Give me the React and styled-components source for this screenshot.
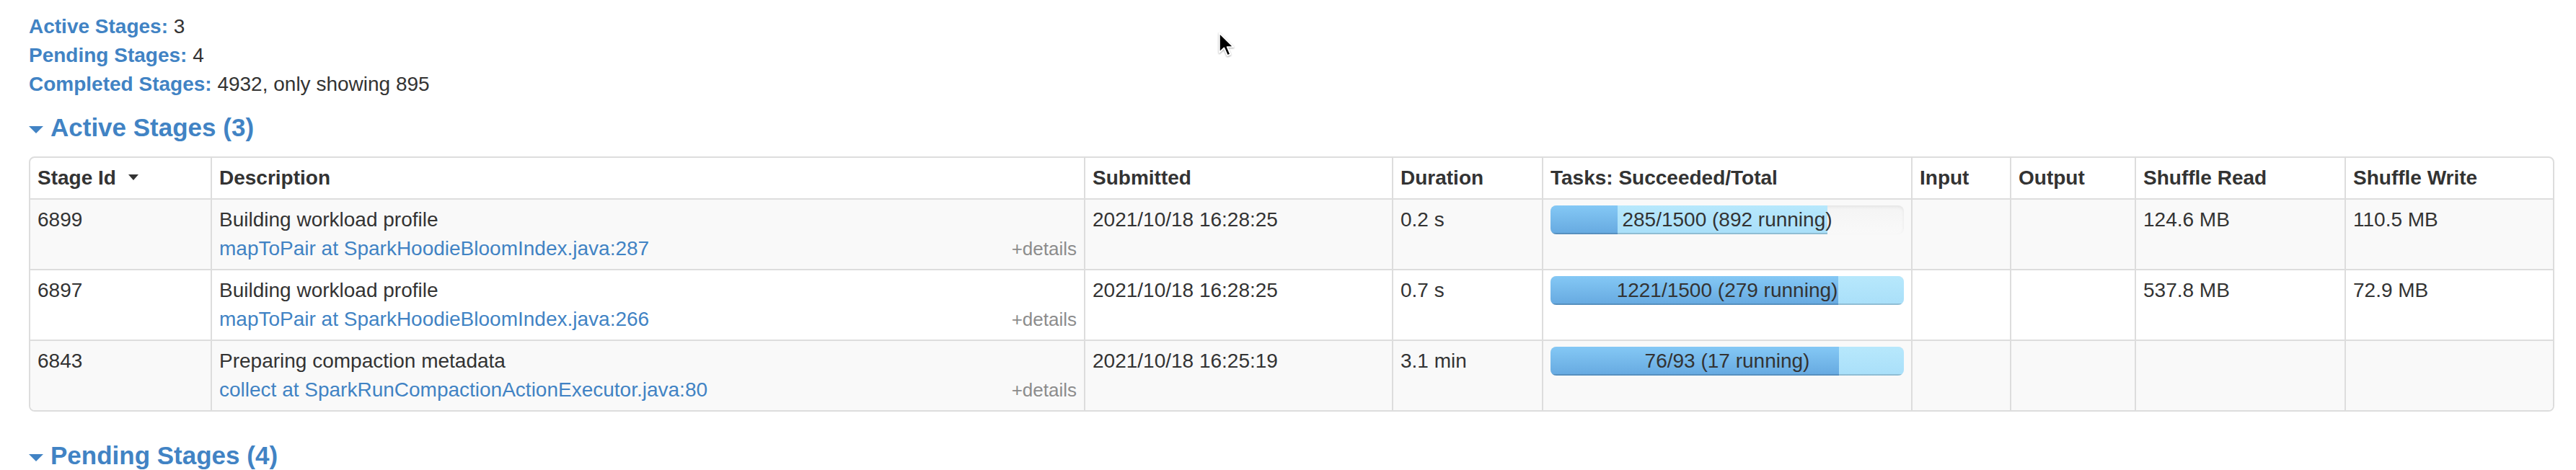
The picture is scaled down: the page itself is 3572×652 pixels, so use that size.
import styled, { createGlobalStyle } from "styled-components";

const linkBlue = "#4183c4";
const border = "#dddddd";

const GlobalStyle = createGlobalStyle`
  html, body {
    margin: 0;
    padding: 0;
    background: #ffffff;
  }
  body {
    font-family: "Liberation Sans", Arial, Helvetica, sans-serif;
    font-size: 28px;
    line-height: 40px;
    color: #333333;
  }
`;

const Page = styled.div`
  position: relative;
  padding: 17px 30px 0 40px;
`;

const Summary = styled.ul`
  list-style: none;
  margin: 0;
  padding: 0;
`;

const SummaryItem = styled.li`
  line-height: 40px;
  white-space: nowrap;
`;

const SummaryLabel = styled.a`
  color: ${linkBlue};
  font-weight: bold;
  text-decoration: none;
`;

const SectionTitle = styled.h4`
  margin: ${(p) => (p.$first ? "20px 0 20px" : "41px 0 0")};
  font-size: 35px;
  line-height: 40px;
  font-weight: bold;
  color: ${linkBlue};
  white-space: nowrap;
`;

const OpenArrow = styled.span`
  display: inline-block;
  width: 0;
  height: 0;
  border-left: 10px solid transparent;
  border-right: 10px solid transparent;
  border-top: 10px solid ${linkBlue};
  margin: 0 10px 4px 0;
`;

const Table = styled.table`
  width: 100%;
  table-layout: fixed;
  border-collapse: separate;
  border-spacing: 0;
  border: 2px solid ${border};
  border-radius: 8px;

  tbody tr:last-child td:first-child {
    border-bottom-left-radius: 6px;
  }
  tbody tr:last-child td:last-child {
    border-bottom-right-radius: 6px;
  }
`;

const Col = styled.col`
  width: ${(p) => p.$w}px;
`;

const HeadCell = styled.th`
  text-align: left;
  font-weight: bold;
  padding: 8px 10px;
  border-left: 2px solid ${border};
  vertical-align: top;
  white-space: nowrap;

  &:first-child {
    border-left: 0;
  }
`;

const SortArrow = styled.span`
  display: inline-block;
  width: 0;
  height: 0;
  border-left: 7px solid transparent;
  border-right: 7px solid transparent;
  border-top: 8px solid #333333;
  margin: 0 0 6px 17px;
`;

const Row = styled.tr`
  background: ${(p) => (p.$striped ? "#f9f9f9" : "#ffffff")};
`;

const Cell = styled.td`
  padding: 8px 10px;
  border-top: 2px solid ${border};
  border-left: 2px solid ${border};
  vertical-align: top;
  white-space: nowrap;

  &:first-child {
    border-left: 0;
  }
`;

const CallSite = styled.div`
  display: flex;
  justify-content: space-between;
  align-items: baseline;
`;

const SiteLink = styled.a`
  color: ${linkBlue};
  text-decoration: none;
`;

const Details = styled.span`
  color: #8c8c8c;
  font-size: 26px;
`;

const Progress = styled.div`
  position: relative;
  display: flex;
  height: 40px;
  border-radius: 8px;
  overflow: hidden;
  background: linear-gradient(#f4f4f4, #f9f9f9);
  box-shadow: inset 0 2px 4px rgba(0, 0, 0, 0.07);
`;

const Bar = styled.div`
  height: 100%;
  flex: none;
  background: ${(p) =>
    p.$running
      ? "linear-gradient(#b7e8fc, #a9dff9)"
      : "linear-gradient(#84c8f5, #66a9e0)"};
  box-shadow: inset 0 -2px 0 rgba(0, 0, 0, 0.15);
`;

const ProgressLabel = styled.span`
  position: absolute;
  left: 0;
  right: 0;
  top: 0;
  text-align: center;
  line-height: 40px;
  color: #333333;
`;

const Cursor = styled.svg`
  position: absolute;
  left: 1689px;
  top: 44px;
  width: 24px;
  height: 36px;
  filter: drop-shadow(0 1px 1px rgba(0, 0, 0, 0.35));
`;

const columns = [
  { title: "Stage Id", w: 250, sort: true },
  { title: "Description", w: 1211 },
  { title: "Submitted", w: 427 },
  { title: "Duration", w: 208 },
  { title: "Tasks: Succeeded/Total", w: 512 },
  { title: "Input", w: 137 },
  { title: "Output", w: 173 },
  { title: "Shuffle Read", w: 291 },
  { title: "Shuffle Write", w: 289 },
];

const stages = [
  {
    id: 6899,
    name: "Building workload profile",
    site: "mapToPair at SparkHoodieBloomIndex.java:287",
    submitted: "2021/10/18 16:28:25",
    duration: "0.2 s",
    done: 285,
    running: 892,
    total: 1500,
    read: "124.6 MB",
    write: "110.5 MB",
  },
  {
    id: 6897,
    name: "Building workload profile",
    site: "mapToPair at SparkHoodieBloomIndex.java:266",
    submitted: "2021/10/18 16:28:25",
    duration: "0.7 s",
    done: 1221,
    running: 279,
    total: 1500,
    read: "537.8 MB",
    write: "72.9 MB",
  },
  {
    id: 6843,
    name: "Preparing compaction metadata",
    site: "collect at SparkRunCompactionActionExecutor.java:80",
    submitted: "2021/10/18 16:25:19",
    duration: "3.1 min",
    done: 76,
    running: 17,
    total: 93,
    read: "",
    write: "",
  },
];

const TaskProgress = ({ done, running, total }) => {
  const donePct = (done / total) * 100;
  const runPct = (running / total) * 100;
  return (
    <Progress>
      <ProgressLabel>
        {done}/{total} ({running} running)
      </ProgressLabel>
      <Bar style={{ width: `${donePct}%` }} />
      <Bar $running style={{ width: `${runPct}%` }} />
    </Progress>
  );
};

const App = () => {
  return (
    <Page>
      <GlobalStyle />
      <Summary>
        <SummaryItem>
          <SummaryLabel href="#active">Active Stages:</SummaryLabel> 3
        </SummaryItem>
        <SummaryItem>
          <SummaryLabel href="#pending">Pending Stages:</SummaryLabel> 4
        </SummaryItem>
        <SummaryItem>
          <SummaryLabel href="#completed">Completed Stages:</SummaryLabel> 4932, only showing 895
        </SummaryItem>
      </Summary>

      <SectionTitle $first>
        <OpenArrow />
        Active Stages (3)
      </SectionTitle>

      <Table>
        <colgroup>
          {columns.map((c) => (
            <Col key={c.title} $w={c.w} />
          ))}
        </colgroup>
        <thead>
          <tr>
            {columns.map((c) => (
              <HeadCell key={c.title}>
                {c.title}
                {c.sort && <SortArrow />}
              </HeadCell>
            ))}
          </tr>
        </thead>
        <tbody>
          {stages.map((s, i) => (
            <Row key={s.id} $striped={i % 2 === 0}>
              <Cell>{s.id}</Cell>
              <Cell>
                <div>{s.name}</div>
                <CallSite>
                  <SiteLink href="#stage">{s.site}</SiteLink>
                  <Details>+details</Details>
                </CallSite>
              </Cell>
              <Cell>{s.submitted}</Cell>
              <Cell>{s.duration}</Cell>
              <Cell>
                <TaskProgress done={s.done} running={s.running} total={s.total} />
              </Cell>
              <Cell></Cell>
              <Cell></Cell>
              <Cell>{s.read}</Cell>
              <Cell>{s.write}</Cell>
            </Row>
          ))}
        </tbody>
      </Table>

      <SectionTitle>
        <OpenArrow />
        Pending Stages (4)
      </SectionTitle>

      <Cursor viewBox="0 0 20 30">
        <path
          d="M1.5 1.5 L1.5 24 L7 18.8 L10.8 27.6 L14.3 26.1 L10.6 17.6 L17.8 17.6 Z"
          fill="#000000"
          stroke="#ffffff"
          strokeWidth="1.6"
          strokeLinejoin="round"
        />
      </Cursor>
    </Page>
  );
};

export default App;
